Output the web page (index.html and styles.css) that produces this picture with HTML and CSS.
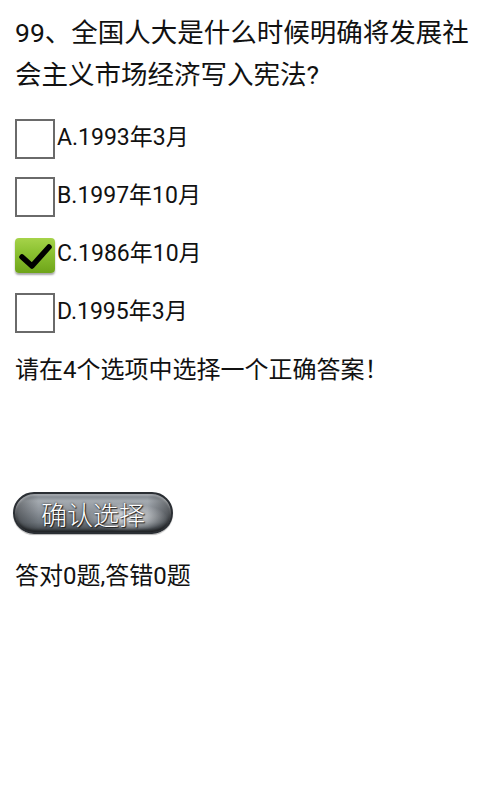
FILE: index.html
```html
<!DOCTYPE html>
<html>
<head>
<meta charset="utf-8">
<link rel="stylesheet" href="styles.css">
</head>
<body>
<div class="page">
  <p class="question">99、全国人大是什么时候明确将发展社会主义市场经济写入宪法?</p>
  <div class="options">
    <div class="option"><span class="box"></span><span class="label">A.1993年3月</span></div>
    <div class="option"><span class="box"></span><span class="label">B.1997年10月</span></div>
    <div class="option"><span class="box checked"><svg viewBox="0 0 40 36" width="40" height="36"><path d="M7 19 L17 28 L34 9" fill="none" stroke="#000" stroke-width="5.5" stroke-linecap="round" stroke-linejoin="round"/></svg></span><span class="label">C.1986年10月</span></div>
    <div class="option"><span class="box"></span><span class="label">D.1995年3月</span></div>
  </div>
  <p class="hint">请在4个选项中选择一个正确答案！</p>
  <button class="confirm">确认选择</button>
  <p class="score">答对0题,答错0题</p>
</div>
</body>
</html>
```
FILE: styles.css
```css
html, body {
  margin: 0;
  padding: 0;
  background: #fff;
}
body {
  font-family: Roboto, "Noto Sans CJK SC", sans-serif;
  color: #111;
}
.page {
  padding: 12px 0 0 15px;
}
.question {
  margin: 0;
  font-size: 26.5px;
  line-height: 42px;
}
.options {
  margin-top: 14px;
  display: flex;
  flex-direction: column;
}
.option {
  display: flex;
  align-items: center;
  height: 58px;
  font-size: 23px;
}
.box {
  width: 36px;
  height: 36px;
  border: 2px solid #6a6a6a;
  margin-right: 2px;
  flex: none;
  position: relative;
}
.box.checked {
  border: none;
  width: 40px;
  height: 35px;
  margin-top: 0;
  border-radius: 4px;
  background: linear-gradient(#a6d34a 0%, #8cc232 40%, #6ea419 100%);
  box-shadow: 0 2px 2px rgba(0,0,0,0.35);
}
.box.checked svg {
  position: absolute;
  left: 0;
  top: 0;
}
.label {
  margin-top: -8px;
}
.hint {
  margin: 8px 0 0;
  font-size: 24px;
  line-height: 40px;
}
.confirm {
  display: block;
  margin: 102px 0 0 -2px;
  width: 160px;
  height: 42px;
  border-radius: 21px;
  border: 2px solid #2a2e33;
  background:
    radial-gradient(ellipse 40px 14px at 72% 62%, rgba(255,255,255,0.8) 0%, rgba(255,255,255,0) 100%),
    linear-gradient(90deg, rgba(0,0,0,0.35) 0%, rgba(0,0,0,0) 15%, rgba(0,0,0,0) 85%, rgba(0,0,0,0.4) 100%),
    linear-gradient(#6f767e 0%, #a4aab0 18%, #8d939a 45%, #6e757c 75%, #3c4146 100%);
  box-shadow: inset 0 2px 2px rgba(255,255,255,0.35), inset 0 -2px 3px rgba(0,0,0,0.5), 0 1px 1px rgba(0,0,0,0.3);
  font-family: "Noto Sans CJK SC", sans-serif;
  font-weight: 300;
  font-size: 26px;
  color: #fff;
  text-shadow: 0 0 2px #1a1a1a, 1px 1px 1px #222;
  padding: 0;
}
.score {
  margin: 22px 0 0;
  font-size: 24px;
  line-height: 40px;
}
```
